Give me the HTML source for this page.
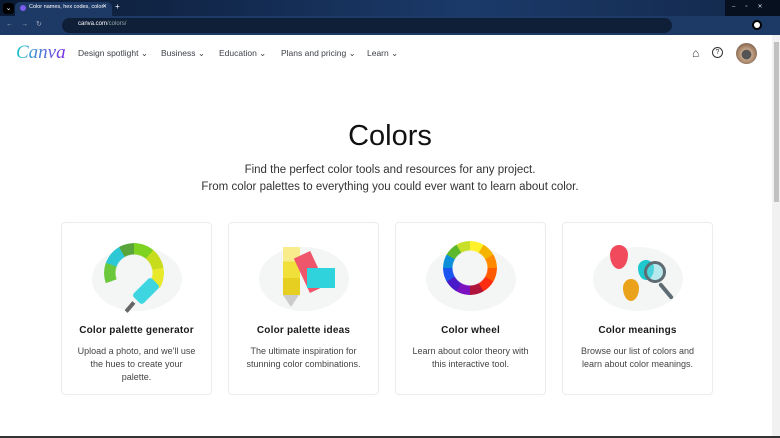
<!DOCTYPE html>
<html><head><meta charset="utf-8"><style>
*{margin:0;padding:0;box-sizing:border-box}
body{width:780px;height:438px;overflow:hidden;background:#fff;font-family:"Liberation Sans",sans-serif;position:relative}
.abs{position:absolute}
.tabbar{left:0;top:0;width:780px;height:16px;background:linear-gradient(90deg,#0b1a33,#1b3a6a 60%,#13284a)}
.addr{left:0;top:16px;width:780px;height:19px;background:#1d3a66}
.omni{left:62px;top:18px;width:610px;height:15px;background:#0f1f38;border-radius:8px}
.tab{left:15px;top:2px;width:97px;height:14px;background:#1d3a66;border-radius:5px 5px 0 0}
.nav{font-size:8.5px;color:#3b3f47;top:48px}
.card{top:222px;width:151px;height:173px;border:1px solid #ececec;border-radius:4px;background:#fff}
.card h3{position:absolute;top:102px;width:100%;text-align:center;font-size:10px;font-weight:bold;color:#1a1a1a;letter-spacing:.2px}
.card p{position:absolute;top:122px;left:13px;right:13px;text-align:center;font-size:9px;line-height:13px;color:#444}
.blob{position:absolute;background:#f4f5f5;border-radius:50%}
</style></head><body>
<div class="abs tabbar"></div>
<div class="abs" style="left:3px;top:3px;width:11px;height:11px;background:#000;border-radius:3px;color:#fff;font-size:7px;text-align:center;line-height:11px">⌄</div>
<div class="abs tab"></div>
<div class="abs" style="left:20px;top:5px;width:6px;height:6px;border-radius:50%;background:#7b5cf0"></div>
<div class="abs" style="left:29px;top:4px;font-size:5.5px;color:#fff">Color names, hex codes, color</div>
<div class="abs" style="left:102px;top:3px;font-size:6px;color:#fff">✕</div>
<div class="abs" style="left:115px;top:2px;font-size:8px;color:#fff">+</div>
<div class="abs" style="left:725px;top:0;width:55px;height:16px;background:#06101f"></div>
<div class="abs" style="left:732px;top:3px;font-size:6px;color:#ddd;letter-spacing:10px">–▫✕</div>
<div class="abs addr"></div>
<div class="abs" style="left:6px;top:20px;font-size:7px;color:#aab;letter-spacing:8px">←→↻</div>
<div class="abs omni"></div>
<div class="abs" style="left:78px;top:21px;font-size:6px;color:#fff">canva.com<span style="color:#9aa">/colors/</span></div>
<div class="abs" style="left:752px;top:20px;width:10px;height:10px;border-radius:50%;background:#fff;border:2px solid #000"></div>
<div class="abs" style="left:772px;top:35px;width:8px;height:403px;background:#f1f1f1"></div>
<div class="abs" style="left:774px;top:42px;width:5px;height:160px;background:#c1c1c1"></div>
<div class="abs" style="left:0;top:436px;width:780px;height:2px;background:#333"></div>

<div class="abs" style="left:16px;top:42px;font-family:'Liberation Serif',serif;font-style:italic;font-size:19px;background:linear-gradient(90deg,#1ec8c8,#7d2ae8);-webkit-background-clip:text;color:transparent">Canva</div>
<div class="abs nav" style="left:78px">Design spotlight ⌄</div>
<div class="abs nav" style="left:161px">Business ⌄</div>
<div class="abs nav" style="left:219px">Education ⌄</div>
<div class="abs nav" style="left:281px">Plans and pricing ⌄</div>
<div class="abs nav" style="left:367px">Learn ⌄</div>
<div class="abs" style="left:692px;top:46px;font-size:12px;color:#333">⌂</div>
<div class="abs" style="left:712px;top:47px;width:11px;height:11px;border:1.3px solid #333;border-radius:50%;font-size:7px;text-align:center;line-height:9px;color:#333">?</div>
<div class="abs" style="left:736px;top:43px;width:21px;height:21px;border-radius:50%;background:radial-gradient(circle at 50% 55%,#555 30%,#c9a98a 32%,#8a6b55 70%)"></div>

<div class="abs" style="left:0;width:780px;top:120px;text-align:center;font-size:29px;color:#111">Colors</div>
<div class="abs" style="left:0;width:780px;top:162px;text-align:center;font-size:11.5px;color:#333;line-height:17px">Find the perfect color tools and resources for any project.<br>From color palettes to everything you could ever want to learn about color.</div>

<div class="abs card" style="left:61px">
 <div class="blob" style="left:30px;top:24px;width:90px;height:64px"></div>
 <div class="abs" style="left:42px;top:20px;width:60px;height:60px;border-radius:50%;background:conic-gradient(#7ed321 0 40deg,#c8dc1e 40deg 80deg,#e7e92a 80deg 120deg,transparent 120deg 250deg,#6bc83a 250deg 290deg,#2cc8d6 290deg 330deg,#5aa53a 330deg);-webkit-mask:radial-gradient(circle,transparent 18px,#000 19px)"></div>
 <div class="abs" style="left:77px;top:55px;width:14px;height:26px;background:#3dd6e0;border-radius:3px;transform:rotate(45deg)"></div>
 <div class="abs" style="left:66px;top:78px;width:4px;height:12px;background:#666;transform:rotate(40deg)"></div>
 <h3>Color palette generator</h3><p>Upload a photo, and we'll use the hues to create your palette.</p>
</div>
<div class="abs card" style="left:228px">
 <div class="blob" style="left:30px;top:24px;width:90px;height:64px"></div>
 <div class="abs" style="left:54px;top:24px;width:17px;height:48px;background:linear-gradient(#f8ec8c 0 30%,#f1df3a 30% 65%,#e6cf20 65%)"></div>
 <div class="abs" style="left:54px;top:72px;width:0;height:0;border-left:8.5px solid transparent;border-right:8.5px solid transparent;border-top:12px solid #ccc"></div>
 <div class="abs" style="left:72px;top:30px;width:18px;height:38px;background:#f0566b;transform:rotate(-25deg)"></div>
 <div class="abs" style="left:78px;top:45px;width:28px;height:20px;background:#2fd3dc"></div>
 <h3>Color palette ideas</h3><p>The ultimate inspiration for stunning color combinations.</p>
</div>
<div class="abs card" style="left:395px">
 <div class="blob" style="left:30px;top:24px;width:90px;height:64px"></div>
 <div class="abs" style="left:47px;top:18px;width:54px;height:54px;border-radius:50%;background:conic-gradient(#fff22a 0 30deg,#f5b400 30deg 60deg,#ff8a00 60deg 90deg,#ff5a00 90deg 120deg,#ff2d10 120deg 150deg,#b0143a 150deg 180deg,#7a12c0 180deg 210deg,#4a1ac8 210deg 240deg,#1a55f0 240deg 270deg,#0c8fd8 270deg 300deg,#5cb82c 300deg 330deg,#c8e02a 330deg);-webkit-mask:radial-gradient(circle,transparent 17px,#000 18px)"></div>
 <h3>Color wheel</h3><p>Learn about color theory with this interactive tool.</p>
</div>
<div class="abs card" style="left:562px">
 <div class="blob" style="left:30px;top:24px;width:90px;height:64px"></div>
 <div class="abs" style="left:47px;top:22px;width:18px;height:24px;background:#f04a5c;border-radius:50%/40% 40% 60% 60%"></div>
 <div class="abs" style="left:75px;top:37px;width:16px;height:20px;background:#1ec8cf;border-radius:50%/40% 40% 60% 60%"></div>
 <div class="abs" style="left:60px;top:56px;width:16px;height:22px;background:#eba21b;border-radius:50%/40% 40% 60% 60%"></div>
 <div class="abs" style="left:81px;top:38px;width:22px;height:22px;border:3.5px solid #5e6b72;border-radius:50%;background:rgba(120,220,230,.5)"></div>
 <div class="abs" style="left:101px;top:58px;width:4px;height:20px;background:#5e6b72;transform:rotate(-40deg);border-radius:2px"></div>
 <h3>Color meanings</h3><p>Browse our list of colors and learn about color meanings.</p>
</div>
</body></html>
